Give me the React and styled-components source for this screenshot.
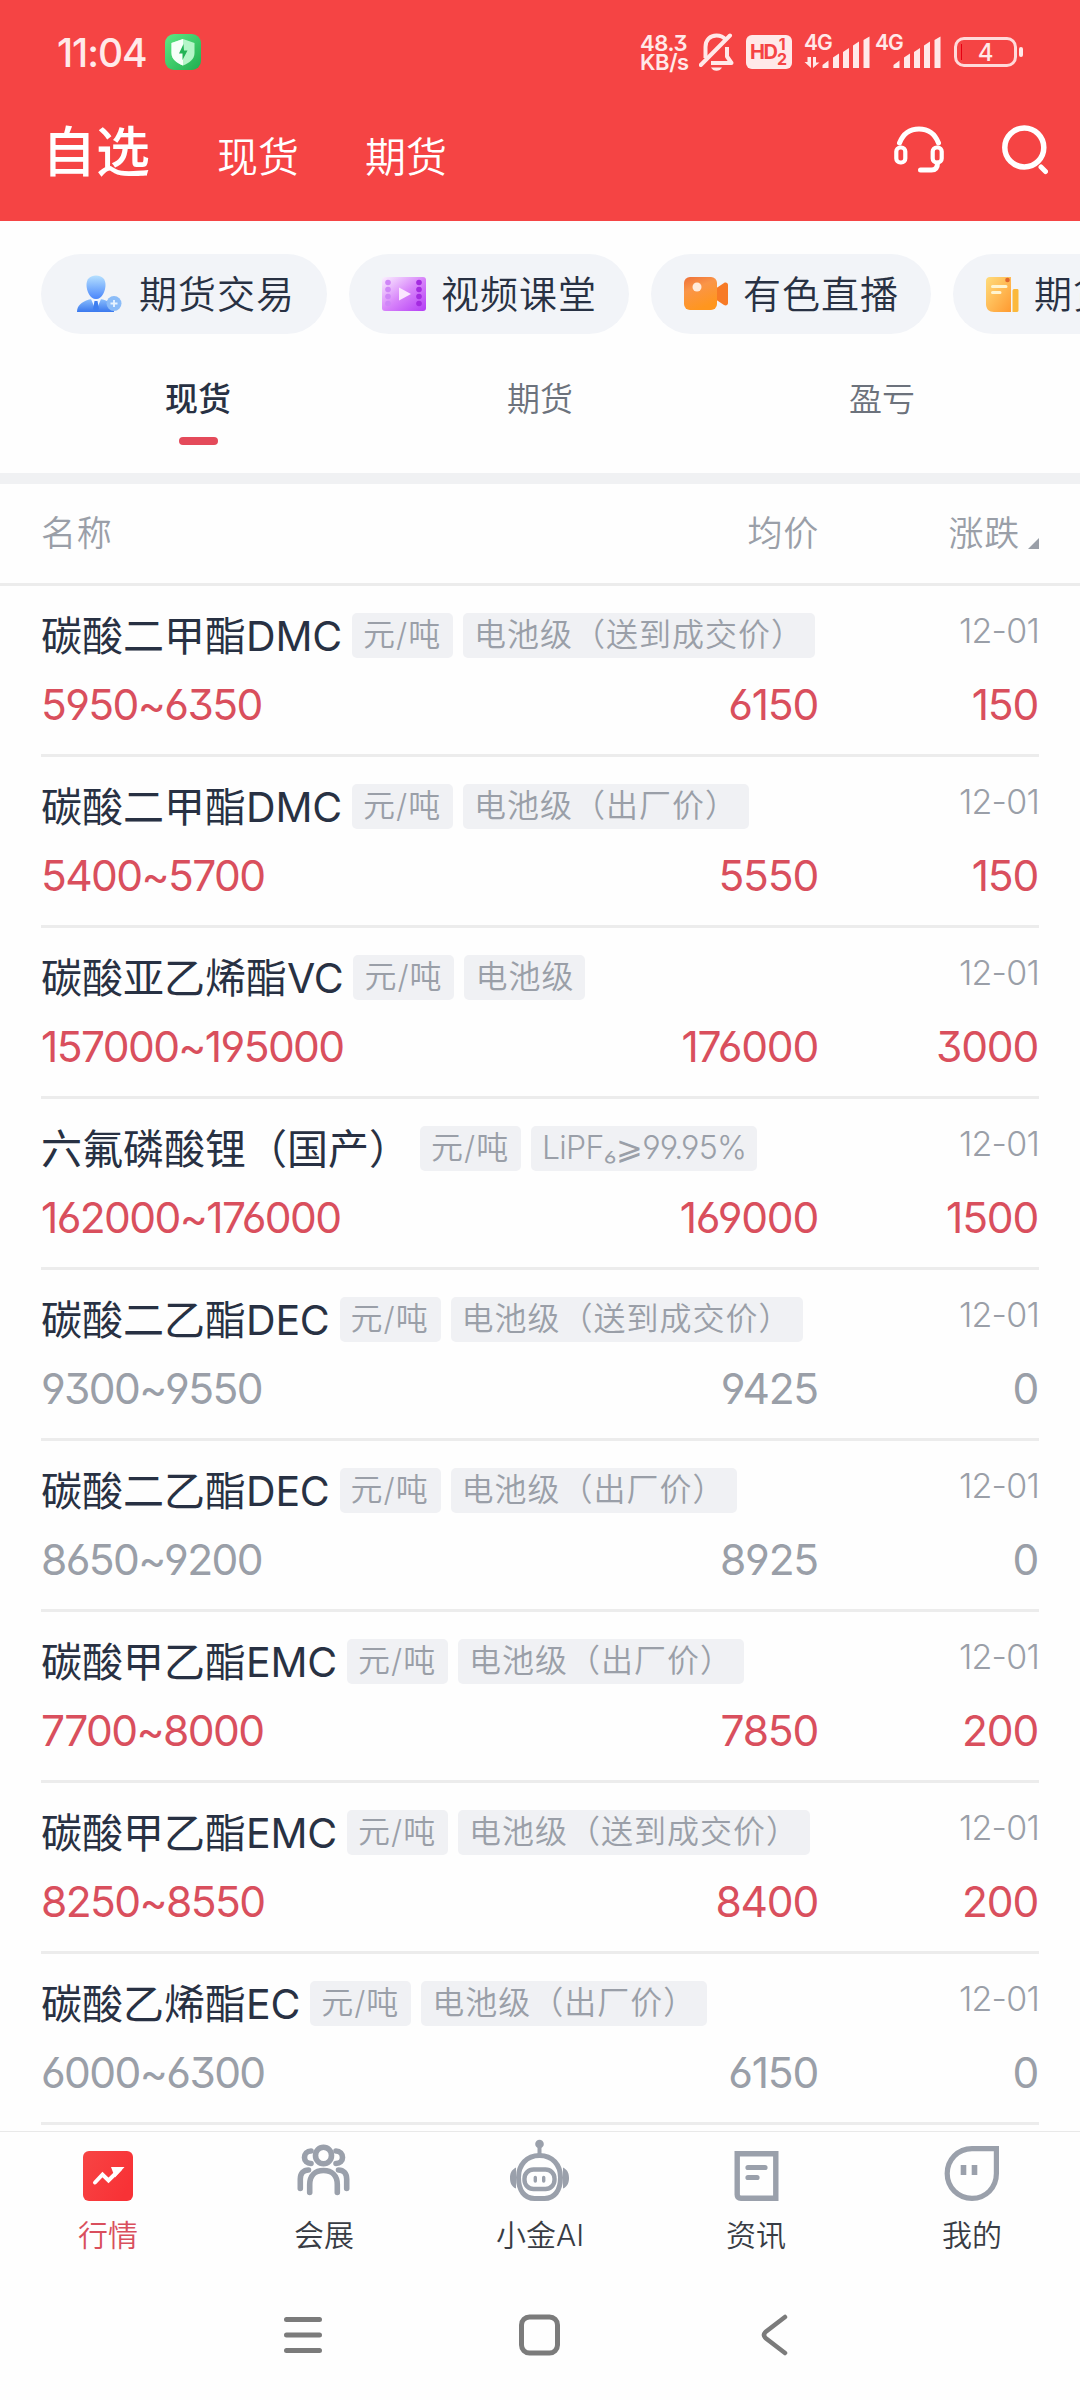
import React, { useState } from "react";
import styled, { createGlobalStyle } from "styled-components";

const GlobalStyle = createGlobalStyle`
  * {
    box-sizing: border-box;
  }

  body {
    margin: 0;
    background: #fefefe;
    font-family: Inter, "Noto Sans CJK SC", sans-serif;
    font-feature-settings: "cv03", "cv04", "cv09";
    font-weight: 350;
  }

  button {
    padding: 0;
    border: 0;
    background: none;
    font: inherit;
    color: inherit;
  }

  svg {
    display: block;
    flex: none;
  }
`;

const Screen = styled.div`
  width: 1080px;
  height: 2400px;
  overflow: hidden;
  display: flex;
  flex-direction: column;
`;

const Header = styled.header`
  height: 221px;
  background: #f54444;
  color: #fff;
`;

const StatusBar = styled.div`
  height: 104px;
  padding: 0 58px 0 57px;
  display: flex;
  align-items: center;
  color: #ffe9e9;
`;

const Clock = styled.span`
  width: 108px;
  font-size: 39px;
  font-weight: 500;
  letter-spacing: -1.1px;
  white-space: nowrap;
`;

const StatusIcons = styled.div`
  margin-left: auto;
  display: flex;
  align-items: center;
`;

const NetSpeed = styled.div`
  width: 59px;
  padding-top: 1px;
  font-size: 22px;
  line-height: 19px;
  font-weight: 600;
  letter-spacing: -0.4px;
`;

const NavBar = styled.div`
  height: 96px;
  padding: 0 32px 0 42px;
  display: flex;
  align-items: center;
`;

const NavTab = styled.button`
  margin-right: 66px;
  padding-top: ${({ $active }) => ($active ? "1px" : "9px")};
  font-size: ${({ $active }) => ($active ? "54px" : "41px")};
  font-weight: ${({ $active }) => ($active ? 500 : 350)};
  line-height: 80px;

  & + & {
    position: relative;
    left: 1px;
  }
`;

const NavActions = styled.div`
  margin-left: auto;
  padding-bottom: 5px;
  display: flex;
  gap: 58px;
`;

const Shortcuts = styled.div`
  height: 113px;
  padding: 33px 0 0 41px;
  display: flex;
  gap: 22px;
`;

const Pill = styled.button`
  flex: none;
  height: 80px;
  padding: 0 32px 0 33px;
  display: flex;
  align-items: center;
  gap: 15px;
  border-radius: 40px;
  background: #f2f4f8;
  color: #283143;
  font-size: 38px;
  letter-spacing: 1px;
`;

const PillLabel = styled.span`
  padding-bottom: 5px;
`;

const Tabs = styled.div`
  height: 139px;
  padding: 0 27px;
  display: grid;
  grid-template-columns: repeat(3, 1fr);
`;

const Tab = styled.button`
  padding-top: 40px;
  display: flex;
  flex-direction: column;
  align-items: center;
  gap: 13px;
  font-size: 33px;
  line-height: 50px;
  font-weight: ${({ $active }) => ($active ? 500 : 350)};
  color: ${({ $active }) => ($active ? "#283143" : "#6c727c")};

  &::after {
    content: "";
    width: 39px;
    height: 8px;
    border-radius: 4px;
    background: ${({ $active }) => ($active ? "#e44a5a" : "transparent")};
  }
`;

const Band = styled.div`
  height: 11px;
  background: #f0f1f3;
`;

const ListHead = styled.div`
  height: 102px;
  padding: 0 41px 6px;
  display: grid;
  grid-template-columns: 1fr 220px;
  align-items: center;
  border-bottom: 3px solid #ececec;
  color: #9a9fa8;
  font-size: 35px;
  letter-spacing: 0.8px;
`;

const HeadLeft = styled.div`
  display: flex;
  justify-content: space-between;
`;

const HeadSort = styled.div`
  display: flex;
  justify-content: flex-end;
  align-items: flex-end;
  gap: 8px;
`;

const SortMark = styled.svg`
  margin-bottom: 7px;
`;

const List = styled.ul`
  flex: none;
  height: 1545px;
  margin: 0;
  padding: 0 41px;
  list-style: none;
`;

const Row = styled.li`
  height: 171px;
  padding-top: 20px;
  border-bottom: 3px solid #ececec;
`;

const RowTop = styled.div`
  height: 58px;
  display: flex;
  align-items: center;
`;

const Name = styled.span`
  margin-right: 10px;
  padding-bottom: 5px;
  color: #283143;
  font-size: 41px;
  font-weight: 400;
  white-space: nowrap;
`;

const Code = styled.span`
  letter-spacing: -0.2px;
`;

const Tag = styled.span`
  height: 45px;
  min-width: 101px;
  margin-right: 10px;
  padding: 0 11px;
  border-radius: 5px;
  background: #f0f1f4;
  color: #9a9fa8;
  font-size: 32px;
  line-height: 44px;
  letter-spacing: ${({ $latin }) => ($latin ? "-0.75px" : "1px")};
  white-space: nowrap;
`;

const DateText = styled.span`
  margin-left: auto;
  padding-bottom: 9px;
  color: #9a9fa8;
  font-size: 34px;
  letter-spacing: -0.8px;
`;

const Prices = styled.div`
  height: 80px;
  padding-right: 1px;
  display: grid;
  grid-template-columns: 1fr 300px 220px;
  align-items: center;
  color: ${({ $flat }) => ($flat ? "#9a9fa8" : "#d94f5d")};
  font-size: 42.5px;
  font-weight: 400;
`;

const Price = styled.span`
  text-align: ${({ $right }) => ($right ? "right" : "left")};
  letter-spacing: ${({ $right }) => ($right ? "-1.2px" : "-1.6px")};
`;

const BottomBar = styled.nav`
  flex: none;
  height: 138px;
  border-top: 1px solid #e9e9e9;
  display: grid;
  grid-template-columns: repeat(5, 1fr);
`;

const BottomItem = styled.button`
  padding-top: 5px;
  display: flex;
  flex-direction: column;
  align-items: center;
  gap: 10px;
  font-size: 30px;
  line-height: 44px;
  color: ${({ $active }) => ($active ? "#d94f5d" : "#383c44")};
`;

const SystemNav = styled.div`
  height: 131px;
  padding: 44px 277px 0 276px;
  display: flex;
  justify-content: space-between;
  align-items: flex-start;
`;

const ShieldIcon = () => (
  <svg width="36" height="36" viewBox="0 0 36 36">
    <defs>
      <linearGradient id="shieldBg" x1="0" y1="0" x2="1" y2="1">
        <stop offset="0" stopColor="#5ee884" />
        <stop offset="1" stopColor="#1fae50" />
      </linearGradient>
    </defs>
    <rect width="36" height="36" rx="9" fill="url(#shieldBg)" />
    <path d="M18 5 29.500 9v10c0 6-5 10-11.500 12.500C11.500 29 6.500 25 6.500 19V9z" fill="#b4f5c8" />
    <path d="M18 5v26.500C11.500 29 6.500 25 6.500 19V9z" fill="#f6fff9" />
    <path d="m18.500 10-4.500 9.500h3.500V26l5-9.500H19z" fill="#23b355" />
  </svg>
);

const BellOffIcon = () => (
  <svg width="36" height="38" viewBox="0 0 36 38" fill="none" stroke="currentColor" strokeWidth="4">
    <path d="M6.500 25V14C6.500 7 11 2.500 17.500 2.500c4 0 7 1.500 9 4" />
    <path d="M12 30h20.500l-4.500-6.500V14" strokeLinejoin="round" />
    <path d="M1.800 32 31 2.500" strokeLinecap="round" />
    <path d="M12 34.500h11c-1 2-3 3.300-5.500 3.300S13 36.500 12 34.500z" fill="currentColor" stroke="none" />
  </svg>
);

const HdBadge = styled.span`
  width: 46px;
  height: 34px;
  margin-left: 11px;
  padding-left: 4px;
  display: flex;
  align-items: center;
  border-radius: 6px;
  background: #ffe9e9;
  color: #f54444;
  font-size: 20px;
  font-weight: 700;
  letter-spacing: -1.4px;
`;

const HdSims = styled.span`
  display: flex;
  flex-direction: column;
  align-items: center;
  width: 11px;
  font-size: 16px;
  line-height: 15px;
  letter-spacing: 0;
`;

const Signal = styled.span`
  width: 66px;
  height: 34px;
  margin-left: ${({ $gap }) => $gap}px;
  position: relative;
  font-size: 21px;
  line-height: 16px;
  font-weight: 600;
  letter-spacing: -1px;

  svg {
    position: absolute;
    left: 0;
    top: 0;
  }
`;

const SignalBars = ({ data }) => (
  <svg width="66" height="34" viewBox="0 0 66 34" fill="currentColor">
    {data && <path d="M3.500 22H7v11L.5 27h3zM9 33V22h3v5.500h3.500z" />}
    <path d="M18.500 33v-3l6-4.500V33zM29 33V22.500l6-4V33zM39 33V17l6-4v20zM49 33V10.500l6-4V33zM59.500 33V5l6-3.500V33z" />
  </svg>
);

const Battery = styled.span`
  width: 63px;
  height: 30px;
  margin: 0 5px 0 13px;
  display: flex;
  align-items: center;
  justify-content: center;
  position: relative;
  border: 3px solid #ffdada;
  border-radius: 10px;
  font-size: 24px;
  font-weight: 500;

  &::after {
    content: "";
    position: absolute;
    right: -9px;
    top: 7px;
    width: 4px;
    height: 10px;
    border-radius: 2px;
    background: #ffe9e9;
  }

  &::before {
    content: "";
    position: absolute;
    left: 4px;
    top: 4px;
    width: 1px;
    height: 16px;
    background: #e60012;
  }
`;

const HeadsetIcon = () => (
  <svg width="50" height="50" viewBox="0 0 50 50" fill="none" stroke="#fff" strokeWidth="5" strokeLinecap="round">
    <path d="M5.500 18C9 9 16 4 25 4s16 5 19.500 14" />
    <rect x="2.300" y="22.500" width="9" height="15" rx="4" strokeWidth="4.200" />
    <rect x="38.700" y="22.500" width="9" height="15" rx="4" strokeWidth="4.200" />
    <path d="M43.500 38c0 4.500-2 7-6 7H26.500" />
  </svg>
);

const SearchIcon = () => (
  <svg width="46" height="50" viewBox="0 0 46 50" fill="none" stroke="#fff" strokeWidth="5.500">
    <circle cx="22.300" cy="22.500" r="19.500" />
    <path d="m39 42 4.500 4.500" strokeLinecap="round" strokeWidth="5" />
  </svg>
);

const TraderIcon = () => (
  <svg width="50" height="44" viewBox="0 0 50 44">
    <defs>
      <linearGradient id="trader" x1="0" y1="0" x2="0" y2="1">
        <stop offset="0" stopColor="#b5e0ff" />
        <stop offset="1" stopColor="#4a86fb" />
      </linearGradient>
      <linearGradient id="traderSuit" x1="0" y1="0" x2="0" y2="1">
        <stop offset="0" stopColor="#8cc0fd" />
        <stop offset="1" stopColor="#3a78ee" />
      </linearGradient>
    </defs>
    <path d="M3 40c0-6 4-10 12-12.500l7-1 7 1c8 2.500 11 7 11 12.500z" fill="url(#traderSuit)" />
    <path d="m17 27 5 12 5-12z" fill="#f2f7ff" />
    <path d="M20.500 29h3l1.500 8-3 3-3-3z" fill="#3f7ff0" />
    <path d="M12.500 13C12.500 7 16 3.500 22 3.500S31.500 7 31.500 13 28 27 22 27s-9.500-8-9.500-14z" fill="url(#trader)" />
    <circle cx="40" cy="31.500" r="7.500" fill="#8bbcf8" />
    <path d="M40 28v7M36.500 31.500h7" stroke="#e8f4ff" strokeWidth="1.800" />
  </svg>
);

const FilmIcon = () => (
  <svg width="44" height="44" viewBox="0 0 44 44">
    <defs>
      <linearGradient id="film" x1="0" y1="0" x2="1" y2="1">
        <stop offset="0" stopColor="#fbf0ff" />
        <stop offset="0.5" stopColor="#d885fa" />
        <stop offset="1" stopColor="#b43cf5" />
      </linearGradient>
    </defs>
    <rect x="0" y="5" width="44" height="34" rx="3" fill="url(#film)" />
    {[10.500, 17.500, 24.500, 31.500].map((y) => (
      <g key={y}>
        <circle cx="6" cy={y} r="2.800" fill="#cf86f7" />
        <circle cx="37" cy={y} r="2.800" fill="#a42be0" />
      </g>
    ))}
    <path d="m17 15.500 12 6.500-12 6.500z" fill="#fbe6ff" />
  </svg>
);

const CameraIcon = () => (
  <svg width="44" height="44" viewBox="0 0 44 44">
    <defs>
      <linearGradient id="camera" x1="0" y1="0" x2="0.4" y2="1">
        <stop offset="0" stopColor="#ee6f38" />
        <stop offset="0.4" stopColor="#fa9548" />
        <stop offset="1" stopColor="#ff961e" />
      </linearGradient>
    </defs>
    <path d="m31 17 9-6c2-1 4 0 4 2v18c0 2-2 3-4 2l-9-6z" fill="#f77a26" />
    <rect x="0" y="5" width="33" height="33" rx="6" fill="url(#camera)" />
    <circle cx="13" cy="15" r="4.500" fill="#ffeadb" />
  </svg>
);

const ReportIcon = () => (
  <svg width="33" height="44" viewBox="0 0 33 44">
    <defs>
      <linearGradient id="report" x1="0" y1="0" x2="1" y2="1">
        <stop offset="0" stopColor="#ffdc7c" />
        <stop offset="1" stopColor="#ff9a30" />
      </linearGradient>
    </defs>
    <path d="M4 5h21v35H8c-5 0-8-3-8-8V9c0-2.500 1.500-4 4-4z" fill="url(#report)" />
    <path d="M28 17h3c1 0 1.500.5 1.500 1.500V38c0 1-.5 2-1.500 2h-4.500V19c0-1 .5-2 1.500-2z" fill="#fbb93c" />
    <path d="M6.500 14.500H20M6.500 20.500H14" stroke="#fff4d0" strokeWidth="3" strokeLinecap="round" />
    <circle cx="21.500" cy="8" r="2.300" fill="#e0672c" />
  </svg>
);

const MarketIcon = () => (
  <svg width="60" height="66" viewBox="0 0 60 66">
    <defs>
      <linearGradient id="market" x1="0" y1="0" x2="1" y2="0.500">
        <stop offset="0" stopColor="#f74444" />
        <stop offset="1" stopColor="#f83236" />
      </linearGradient>
    </defs>
    <rect x="5" y="14" width="50" height="50" rx="6" fill="url(#market)" />
    <path d="m17 45.500 7.500-8 6 6L42 32" fill="none" stroke="#fff" strokeWidth="4" strokeLinecap="round" />
    <path d="M33 30h13.500L37 40.500z" fill="#fff" />
  </svg>
);

const PeopleIcon = () => (
  <svg width="60" height="66" viewBox="0 0 60 66" fill="none" stroke="#9aa0ab" strokeWidth="5.600" strokeLinecap="round">
    <ellipse cx="29.500" cy="18.500" rx="8" ry="8.300" />
    <path d="M15.700 55.500V47.500c0-9 5.500-14 13.800-14s13.800 5 13.800 14v8" />
    <path d="M17 14c-4 0-6.500 3-6.500 6.500S13 26.500 17 26.500M42 14c4 0 6.500 3 6.500 6.500S46 26.500 42 26.500" />
    <path d="M14.500 33c-5 0-8.200 3.500-8.200 9v9.500M44.500 33c5 0 8.200 3.500 8.200 9v9.500" />
  </svg>
);

const RobotIcon = () => (
  <svg width="60" height="66" viewBox="0 0 60 66" fill="none" stroke="#9aa0ab" strokeWidth="5">
    <circle cx="29.500" cy="7" r="4.300" fill="#9aa0ab" stroke="none" />
    <path d="M29.500 9v9" strokeWidth="4" />
    <path d="M29.500 18.500c13 0 21 9.500 21 22 0 13-6 21-16 21h-10c-10 0-16-8-16-21 0-12.500 8-22 21-22z" />
    <rect x="14.500" y="32.500" width="30" height="19.500" rx="9" strokeWidth="4.400" />
    <path d="M6 30.500C1 33 0 37 0 41s1 8.500 6 10.500zM53 30.500c5 2.500 6 6.500 6 10.500s-1 8.500-6 10.500z" fill="#9aa0ab" stroke="none" />
    <path d="M25.300 40.500v3.500M33.700 40.500v3.500" strokeWidth="3.400" strokeLinecap="round" />
  </svg>
);

const NewsIcon = () => (
  <svg width="60" height="66" viewBox="0 0 60 66" fill="none" stroke="#9aa0ab">
    <path d="M11.200 16.700h38.600v44.600H15c-2.500 0-3.800-1.300-3.800-3.800z" strokeWidth="5.400" />
    <path d="M22 30.500h17M22 40.500h9" strokeWidth="5.200" strokeLinecap="round" />
  </svg>
);

const MineIcon = () => (
  <svg width="60" height="66" viewBox="0 0 60 66" fill="none" stroke="#9aa0ab">
    <path d="M30 11.600h24.400v25c0 14-10.500 24.800-24.400 24.800S5.200 50.500 5.200 36.600 16 11.600 30 11.600z" strokeWidth="5.200" />
    <path d="M21.500 28v10M32.500 28v10" strokeWidth="5.600" />
  </svg>
);

const shortcuts = [
  { label: "期货交易", Icon: TraderIcon },
  { label: "视频课堂", Icon: FilmIcon },
  { label: "有色直播", Icon: CameraIcon },
  { label: "期货", Icon: ReportIcon },
];

const bottomItems = [
  { label: "行情", Icon: MarketIcon },
  { label: "会展", Icon: PeopleIcon },
  { label: "小金AI", Icon: RobotIcon },
  { label: "资讯", Icon: NewsIcon },
  { label: "我的", Icon: MineIcon },
];

const quotes = [
  { id: 1, name: "碳酸二甲酯", code: "DMC", spec: "电池级（送到成交价）", range: "5950~6350", avg: "6150", change: "150" },
  { id: 2, name: "碳酸二甲酯", code: "DMC", spec: "电池级（出厂价）", range: "5400~5700", avg: "5550", change: "150" },
  { id: 3, name: "碳酸亚乙烯酯", code: "VC", spec: "电池级", range: "157000~195000", avg: "176000", change: "3000" },
  { id: 4, name: "六氟磷酸锂（国产）", code: "", spec: "LiPF₆⩾99.95%", latin: true, range: "162000~176000", avg: "169000", change: "1500" },
  { id: 5, name: "碳酸二乙酯", code: "DEC", spec: "电池级（送到成交价）", range: "9300~9550", avg: "9425", change: "0" },
  { id: 6, name: "碳酸二乙酯", code: "DEC", spec: "电池级（出厂价）", range: "8650~9200", avg: "8925", change: "0" },
  { id: 7, name: "碳酸甲乙酯", code: "EMC", spec: "电池级（出厂价）", range: "7700~8000", avg: "7850", change: "200" },
  { id: 8, name: "碳酸甲乙酯", code: "EMC", spec: "电池级（送到成交价）", range: "8250~8550", avg: "8400", change: "200" },
  { id: 9, name: "碳酸乙烯酯", code: "EC", spec: "电池级（出厂价）", range: "6000~6300", avg: "6150", change: "0" },
];

const QuoteItem = ({ item }) => (
  <Row>
    <RowTop>
      <Name>
        {item.name}
        <Code>{item.code}</Code>
      </Name>
      <Tag>元/吨</Tag>
      <Tag $latin={item.latin}>{item.spec}</Tag>
      <DateText>12-01</DateText>
    </RowTop>
    <Prices $flat={item.change === "0"}>
      <Price>{item.range}</Price>
      <Price $right>{item.avg}</Price>
      <Price $right>{item.change}</Price>
    </Prices>
  </Row>
);

const App = () => {
  const [nav, setNav] = useState("自选");
  const [tab, setTab] = useState("现货");
  const [page, setPage] = useState("行情");

  return (
    <Screen>
      <GlobalStyle />
      <Header>
        <StatusBar>
          <Clock>11:04</Clock>
          <ShieldIcon />
          <StatusIcons>
            <NetSpeed>
              48.3
              <br />
              KB/s
            </NetSpeed>
            <BellOffIcon />
            <HdBadge>
              HD
              <HdSims>
                <span>1</span>
                <span>2</span>
              </HdSims>
            </HdBadge>
            <Signal $gap={12}>
              4G
              <SignalBars data />
            </Signal>
            <Signal $gap={5}>
              4G
              <SignalBars />
            </Signal>
            <Battery>4</Battery>
          </StatusIcons>
        </StatusBar>
        <NavBar>
          {["自选", "现货", "期货"].map((label) => (
            <NavTab key={label} $active={nav === label} onClick={() => setNav(label)}>
              {label}
            </NavTab>
          ))}
          <NavActions>
            <HeadsetIcon />
            <SearchIcon />
          </NavActions>
        </NavBar>
      </Header>
      <Shortcuts>
        {shortcuts.map(({ label, Icon }) => (
          <Pill key={label}>
            <Icon />
            <PillLabel>{label}</PillLabel>
          </Pill>
        ))}
      </Shortcuts>
      <Tabs>
        {["现货", "期货", "盈亏"].map((label) => (
          <Tab key={label} $active={tab === label} onClick={() => setTab(label)}>
            {label}
          </Tab>
        ))}
      </Tabs>
      <Band />
      <ListHead>
        <HeadLeft>
          <span>名称</span>
          <span>均价</span>
        </HeadLeft>
        <HeadSort>
          涨跌
          <SortMark width="11" height="11" viewBox="0 0 11 11">
            <path d="M11 0v11H0z" fill="#9a9fa8" />
          </SortMark>
        </HeadSort>
      </ListHead>
      <List>
        {quotes.map((item) => (
          <QuoteItem key={item.id} item={item} />
        ))}
      </List>
      <BottomBar>
        {bottomItems.map(({ label, Icon }) => (
          <BottomItem key={label} $active={page === label} onClick={() => setPage(label)}>
            <Icon />
            {label}
          </BottomItem>
        ))}
      </BottomBar>
      <SystemNav>
        <svg width="54" height="44" viewBox="0 0 54 44" stroke="#7b7b7b" strokeWidth="5" strokeLinecap="round">
          <path d="M10.500 6.500h33M10.500 22h33M10.500 37.500h33" />
        </svg>
        <svg width="54" height="44" viewBox="0 0 54 44" fill="none" stroke="#7b7b7b" strokeWidth="5">
          <rect x="8.500" y="4" width="36" height="36" rx="8" />
        </svg>
        <svg width="54" height="44" viewBox="0 0 54 44" fill="none" stroke="#7b7b7b" strokeWidth="4.500" strokeLinecap="round">
          <path d="M36 4 16.500 19c-2 2-2 4 0 6L36 40" />
        </svg>
      </SystemNav>
    </Screen>
  );
};

export default App;
